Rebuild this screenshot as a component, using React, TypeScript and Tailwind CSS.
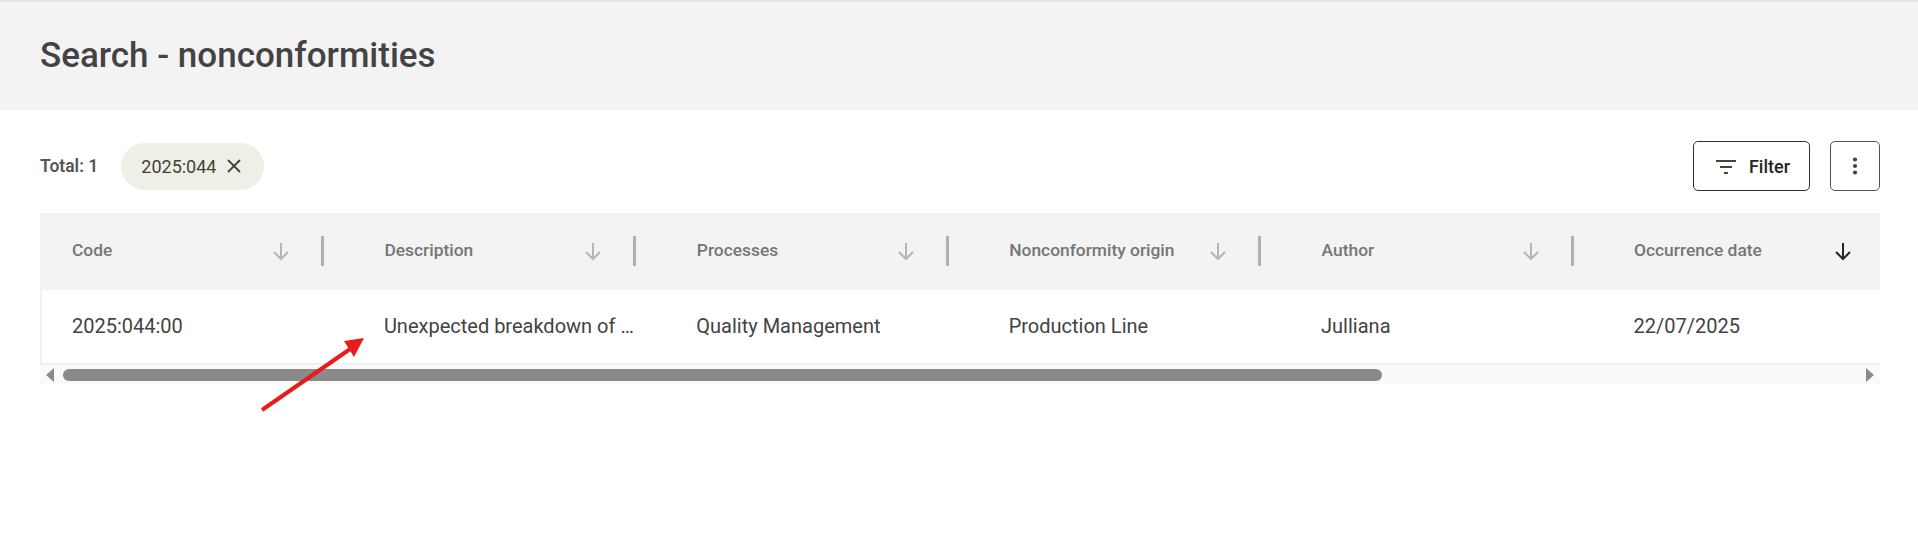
import { X } from 'lucide-react';

const columns = [
  { title: 'Code', value: '2025:044:00' },
  { title: 'Description', value: 'Unexpected breakdown of equipment' },
  { title: 'Processes', value: 'Quality Management' },
  { title: 'Nonconformity origin', value: 'Production Line' },
  { title: 'Author', value: 'Julliana' },
  { title: 'Occurrence date', value: '22/07/2025', active: true },
];

function SortArrow({ active }: { active?: boolean }) {
  return (
    <svg width="24" height="24" viewBox="0 0 24 24" fill="none" className={active ? 'text-[#26261f]' : 'text-[#b5b5b3]'}>
      <path d="M12 4v16M5 13l7 7 7-7" stroke="currentColor" strokeWidth="2" />
    </svg>
  );
}

export default function App() {
  return (
    <div className="relative h-[552px] w-[1918px] overflow-hidden bg-white font-['Roboto',sans-serif]">
      <header className="flex h-[110px] items-center border-t-2 border-[#e6e6e6] bg-[#f3f3f3] pl-10">
        <h1 className="text-[35px] font-medium text-[#434343]">Search - nonconformities</h1>
      </header>

      <div className="pl-10 pr-[38px]">
        <div className="flex h-[103px] items-center pt-[9px]">
          <span className="text-[17.5px] font-semibold text-[#555555]">Total: 1</span>
          <div className="ml-[23px] flex h-[47px] w-[143px] items-center gap-[7px] rounded-full bg-[#eeefe7] pl-[20px]">
            <span className="text-[18px] text-[#434336]">2025:044</span>
            <X size={22} strokeWidth={2} className="text-[#434336]" />
          </div>
          <button className="ml-auto flex h-[50px] w-[117px] items-center justify-center gap-[12px] rounded-[5px] border border-[#34342a] text-[18px] font-medium text-[#26261f]">
            <svg width="24" height="24" viewBox="0 0 24 24" fill="#434336">
              <path d="M3 6h20v2H3zM7 12h12v2H7zM11 18h4v2h-4z" />
            </svg>
            Filter
          </button>
          <button className="ml-5 flex h-[50px] w-[50px] items-center justify-center rounded-[5px] border border-[#55554a]">
            <svg width="24" height="24" viewBox="0 0 24 24" fill="#434343">
              <circle cx="12" cy="5.5" r="2.1" />
              <circle cx="12" cy="12" r="2.1" />
              <circle cx="12" cy="18.5" r="2.1" />
            </svg>
          </button>
        </div>

        <div className="overflow-hidden">
          <div className="flex h-[77px] w-[1900px] items-center bg-[#f3f3f3]">
            {columns.map((col) => (
              <div key={col.title} className="flex h-[77px] w-[312.4px] shrink-0 items-center pb-[2px] pl-8 pr-[28.4px]">
                <span className="flex-1 whitespace-nowrap text-[17.4px] font-medium text-[#767676]">{col.title}</span>
                <SortArrow active={col.active} />
                <div className="ml-[28px] h-[30px] w-[3px] bg-[#b0b0b0]" />
              </div>
            ))}
          </div>
          <div className="flex h-[75px] w-[1900px] border-b-2 border-l-2 border-[#f0f0f0]">
            {columns.map((col) => (
              <div key={col.title} className="flex w-[312.4px] shrink-0 items-center pb-[2px] pl-[31.5px] pr-[28px] first:w-[310.4px] first:pl-[30px]">
                <span className="truncate text-[20px] text-[#434343]">{col.value}</span>
              </div>
            ))}
          </div>
          <div className="flex h-[19px] items-center bg-[#fafafa] pl-[5px] pr-[5px]">
            <svg width="10" height="14" viewBox="0 0 10 14" fill="#8a8a8a">
              <path d="M9 0v14L1 7z" />
            </svg>
            <div className="ml-[8px] h-[12px] w-[1319px] rounded-full bg-[#8a8a8a]" />
            <svg width="10" height="14" viewBox="0 0 10 14" fill="#8a8a8a" className="ml-auto">
              <path d="M1 0v14l8-7z" />
            </svg>
          </div>
        </div>
      </div>

      <svg width="120" height="90" viewBox="0 0 120 90" className="absolute left-[255px] top-[330px]" fill="none">
        <path d="M7 80L98 17" stroke="#e81c1c" strokeWidth="4" />
        <path d="M109 8L89 11L99 27z" fill="#e81c1c" />
      </svg>
    </div>
  );
}
